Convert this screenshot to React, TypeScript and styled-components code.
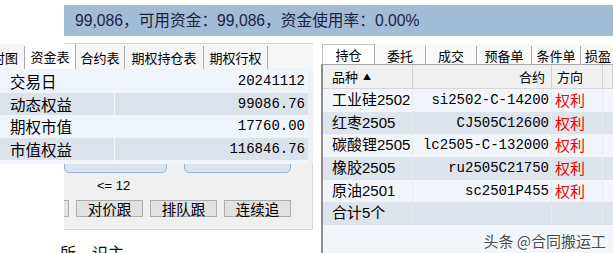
import React from "react";
import styled, { createGlobalStyle } from "styled-components";

const Global = createGlobalStyle`
  html, body { margin: 0; padding: 0; background: #fff; }
  body { width: 613px; height: 253px; overflow: hidden; }
`;

const CJK = `"Noto Sans CJK SC", "Noto Sans", sans-serif`;
const MONO = `"Liberation Mono", "Noto Sans CJK SC", monospace`;

const Page = styled.div`
  width: 613px;
  height: 253px;
  overflow: hidden;
  background: #fff;
  display: flex;
  flex-direction: column;
  font-family: ${CJK};
  color: #000;
`;

const TopRow = styled.div`
  display: grid;
  grid-template-columns: 64px 1fr;
  height: 43px;
  flex: none;
`;

const InfoBar = styled.div`
  margin-top: 5px;
  height: 31px;
  background: #a3bcd6;
  color: #1c2140;
  font-family: "Liberation Sans", "Noto Sans CJK SC", sans-serif;
  font-size: 15.7px;
  line-height: 31px;
  padding-left: 11px;
  white-space: nowrap;
`;

const Main = styled.div`
  flex: 1;
  display: flex;
  min-height: 0;
`;

const LeftPane = styled.div`
  width: 313px;
  flex: none;
  position: relative;
  display: flex;
  flex-direction: column;
  overflow: hidden;
`;

const OrderPanel = styled.div`
  margin-left: 64px;
  height: 185px;
  flex: none;
  background: #f0f0f0;
  border: 1px solid #d6d6d6;
  border-left: none;
  overflow: hidden;
  display: flex;
  flex-direction: column;
`;

const BoxRow = styled.div`
  margin-top: 99px;
  display: flex;
  gap: 17px;
`;

const InputBox = styled.div<{ $w: number }>`
  width: ${(p) => p.$w}px;
  height: 30px;
  box-sizing: border-box;
  background: #d9e4f1;
  border: 1px solid #97b5da;
  border-radius: 0 0 5px 5px;
`;

const LimitText = styled.div`
  margin-top: 5px;
  padding-left: 33px;
  font-family: "Liberation Sans", sans-serif;
  font-size: 13px;
  line-height: 16px;
`;

const ButtonRow = styled.div`
  margin-top: 6px;
  margin-left: -62px;
  display: flex;
  gap: 7px;
`;

const FollowButton = styled.div`
  width: 67px;
  height: 17px;
  flex: none;
  box-sizing: border-box;
  background: #e1e1e1;
  border: 1px solid #adadad;
  font-size: 14.5px;
  line-height: 15px;
  text-align: center;
  white-space: nowrap;
`;

const BottomText = styled.div`
  flex: none;
  margin-top: 13px;
  padding-left: 60px;
  display: flex;
  gap: 16px;
  font-size: 16px;
  line-height: 18px;
  white-space: nowrap;
  color: #111;
`;

const CapitalWindow = styled.div`
  position: absolute;
  top: 1px;
  left: 0;
  width: 313px;
  height: 120px;
  overflow: hidden;
  background: #edf1f5;
  display: flex;
  flex-direction: column;
`;

const LeftTabs = styled.div`
  height: 25px;
  flex: none;
  display: flex;
  background: #f6f6f6;
`;

const LeftTab = styled.div<{ $w: number; $active?: boolean; $clip?: boolean }>`
  width: ${(p) => p.$w}px;
  flex: none;
  box-sizing: border-box;
  display: flex;
  align-items: center;
  justify-content: ${(p) => (p.$clip ? "flex-end" : "center")};
  padding-right: ${(p) => (p.$clip ? "6px" : "0")};
  overflow: hidden;
  white-space: nowrap;
  font-size: 13px;
  background: ${(p) => (p.$active ? "#ffffff" : "transparent")};
  border-right: 1px solid #a9a9a9;
  margin: ${(p) => (p.$active ? "0" : "2px 0 0")};
`;

const CapitalTable = styled.div`
  width: 308px;
  margin-top: 1px;
  display: flex;
  flex-direction: column;
`;

const CapRow = styled.div<{ $dark: boolean }>`
  height: 22.5px;
  flex: none;
  display: grid;
  grid-template-columns: 115px 1fr;
  background: ${(p) => (p.$dark ? "#dbe2ea" : "#eff5fb")};
`;

const CapLabel = styled.div`
  padding-left: 10px;
  font-size: 15.5px;
  line-height: 22.5px;
  border-right: 1px solid #f4f7fa;
  white-space: nowrap;
`;

const CapValue = styled.div`
  padding-right: 3px;
  text-align: right;
  font-family: ${MONO};
  font-size: 14px;
  line-height: 22.5px;
`;

const RightPane = styled.div`
  flex: 1;
  display: flex;
  flex-direction: column;
  min-width: 0;
`;

const RightTabs = styled.div`
  margin: 1px 0 0 9px;
  height: 20px;
  flex: none;
  display: flex;
  background: #fafafa;
  overflow: hidden;
`;

const RightTab = styled.div<{ $w: number; $active?: boolean; $left?: boolean }>`
  width: ${(p) => p.$w}px;
  flex: none;
  box-sizing: border-box;
  display: flex;
  align-items: center;
  justify-content: ${(p) => (p.$left ? "flex-start" : "center")};
  padding-left: ${(p) => (p.$left ? "4px" : "0")};
  font-size: 13px;
  white-space: nowrap;
  background: ${(p) => (p.$active ? "#ffffff" : "transparent")};
  border-top: ${(p) => (p.$active ? "1px solid #c4c4c4" : "none")};
  border-left: ${(p) => (p.$active ? "1px solid #c4c4c4" : "none")};
  border-right: 1px solid #a9a9a9;
  margin-top: ${(p) => (p.$active ? "0" : "2px")};
`;

const PositionTable = styled.div`
  flex: 1;
  margin-left: 8px;
  border-left: 2px solid #8e8e8e;
  border-top: 1px solid #a8a8a8;
  background: #f2f6fb;
  position: relative;
  display: flex;
  flex-direction: column;
  overflow: hidden;
`;

const GridRow = styled.div<{ $bg: string; $h: number }>`
  height: ${(p) => p.$h}px;
  flex: none;
  display: grid;
  grid-template-columns: 90px 139px 51px 1fr;
  background: ${(p) => p.$bg};
`;

const HeadCell = styled.div<{ $align?: string; $pad?: string }>`
  font-size: 13px;
  line-height: 24px;
  text-align: ${(p) => p.$align || "left"};
  padding: ${(p) => p.$pad || "0"};
  border-right: 1px solid #d2d2d2;
  border-bottom: 1px solid #d6d6d6;
  white-space: nowrap;
  overflow: hidden;
`;

const SortArrow = styled.span`
  font-size: 8px;
  margin-left: 5px;
  vertical-align: 2px;
`;

const NameCell = styled.div`
  padding-left: 9px;
  font-size: 15px;
  line-height: 22.7px;
  white-space: nowrap;
  border-right: 1px solid #e6ebf1;
  font-family: "Liberation Sans", "Noto Sans CJK SC", sans-serif;
`;

const CodeCell = styled.div`
  padding-right: 2px;
  text-align: right;
  font-family: ${MONO};
  font-size: 14px;
  line-height: 22.7px;
  white-space: nowrap;
  border-right: 1px solid #e6ebf1;
`;

const SideCell = styled.div`
  padding-left: 3px;
  color: #f00000;
  font-size: 15px;
  line-height: 22.7px;
  white-space: nowrap;
  border-right: 1px solid #e6ebf1;
`;

const EmptyCell = styled.div``;

const Watermark = styled.div`
  position: absolute;
  right: 7px;
  bottom: 2px;
  font-size: 15px;
  line-height: 20px;
  color: #4a4a4a;
  text-shadow: 0 0 2px #fff, 0 0 2px #fff;
  white-space: nowrap;
`;

const capital = [
  ["交易日", "20241112"],
  ["动态权益", "99086.76"],
  ["期权市值", "17760.00"],
  ["市值权益", "116846.76"],
  ["可用资金", "99086.76"],
];

const positions = [
  ["工业硅2502", "si2502-C-14200", "权利"],
  ["红枣2505", "CJ505C12600", "权利"],
  ["碳酸锂2505", "lc2505-C-132000", "权利"],
  ["橡胶2505", "ru2505C21750", "权利"],
  ["原油2501", "sc2501P455", "权利"],
];

const LIGHT = "#f2f6fb";
const DARK = "#dde4ec";

export default function App() {
  return (
    <>
      <Global />
      <Page>
        <TopRow>
          <div />
          <InfoBar>99,086，可用资金：99,086，资金使用率：0.00%</InfoBar>
        </TopRow>
        <Main>
          <LeftPane>
            <OrderPanel>
              <BoxRow>
                <InputBox $w={103} />
                <InputBox $w={107} />
              </BoxRow>
              <LimitText>&lt;= 12</LimitText>
              <ButtonRow>
                <FollowButton>对手价</FollowButton>
                <FollowButton>对价跟</FollowButton>
                <FollowButton>排队跟</FollowButton>
                <FollowButton>连续追</FollowButton>
              </ButtonRow>
            </OrderPanel>
            <BottomText>
              <span>所</span>
              <span>识主</span>
            </BottomText>
            <CapitalWindow>
              <LeftTabs>
                <LeftTab $w={25} $clip>时图</LeftTab>
                <LeftTab $w={51} $active>资金表</LeftTab>
                <LeftTab $w={49}>合约表</LeftTab>
                <LeftTab $w={79}>期权持仓表</LeftTab>
                <LeftTab $w={64}>期权行权</LeftTab>
              </LeftTabs>
              <CapitalTable>
                {capital.map(([k, v], i) => (
                  <CapRow key={k} $dark={i % 2 === 1}>
                    <CapLabel>{k}</CapLabel>
                    <CapValue>{v}</CapValue>
                  </CapRow>
                ))}
              </CapitalTable>
            </CapitalWindow>
          </LeftPane>
          <RightPane>
            <RightTabs>
              <RightTab $w={53} $active>持仓</RightTab>
              <RightTab $w={51}>委托</RightTab>
              <RightTab $w={51}>成交</RightTab>
              <RightTab $w={55}>预备单</RightTab>
              <RightTab $w={49}>条件单</RightTab>
              <RightTab $w={40} $left>损盈</RightTab>
            </RightTabs>
            <PositionTable>
              <GridRow $bg="#f0f0f0" $h={24}>
                <HeadCell $pad="0 0 0 9px">
                  品种<SortArrow>▲</SortArrow>
                </HeadCell>
                <HeadCell $align="right" $pad="0 6px 0 0">合约</HeadCell>
                <HeadCell $pad="0 0 0 5px">方向</HeadCell>
                <HeadCell />
              </GridRow>
              {positions.map(([name, code, side], i) => (
                <GridRow key={code} $bg={i % 2 === 0 ? LIGHT : DARK} $h={22.7}>
                  <NameCell>{name}</NameCell>
                  <CodeCell>{code}</CodeCell>
                  <SideCell>{side}</SideCell>
                  <EmptyCell />
                </GridRow>
              ))}
              <GridRow $bg={DARK} $h={22.7}>
                <NameCell>合计5个</NameCell>
                <CodeCell />
                <SideCell />
                <EmptyCell />
              </GridRow>
              <Watermark>头条 @合同搬运工</Watermark>
            </PositionTable>
          </RightPane>
        </Main>
      </Page>
    </>
  );
}
